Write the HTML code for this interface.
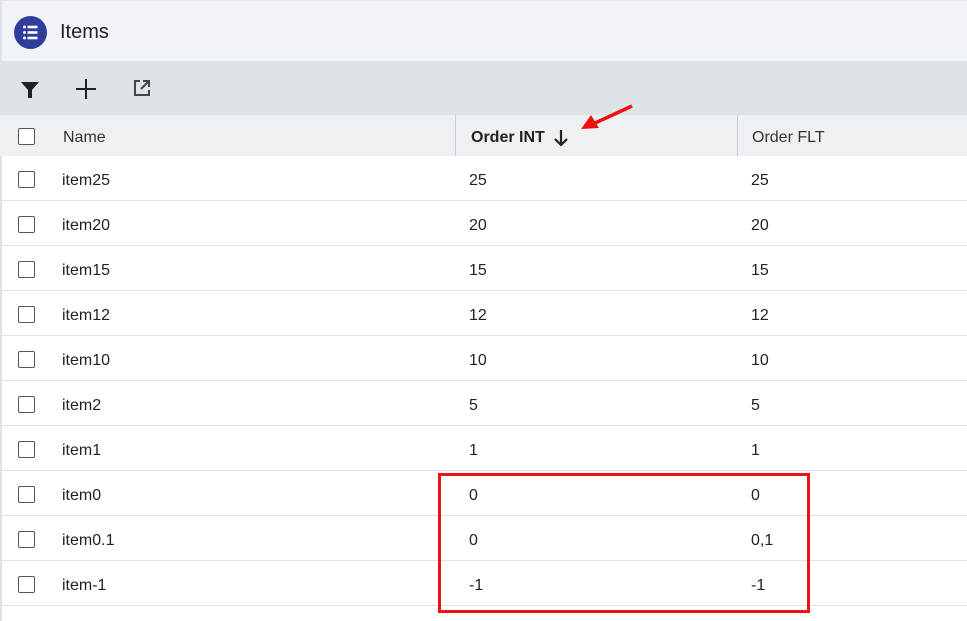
<!DOCTYPE html><html><head><style>
body{margin:0;width:967px;height:621px;overflow:hidden;background:#fff;font-family:"Liberation Sans",sans-serif;position:relative}
.top{position:absolute;left:0;top:0;width:967px;height:61px;background:#f1f5fa;border-left:2px solid #dfe3e6;border-top:1px solid #e4e7ea;box-sizing:border-box}
.logo{position:absolute;left:14px;top:16px;width:33px;height:33px;border-radius:50%;background:#2f3e9c}
.title{position:absolute;left:60px;top:21px;font-size:20px;color:#222}
.tb{position:absolute;left:0;top:61px;width:967px;height:54px;background:#dde3e7}
.hd{position:absolute;left:0;top:115px;width:967px;height:41px;background:#eef1f4}
.cb{position:absolute;left:18px;width:17px;height:17px;border:1.5px solid #555;border-radius:2px;background:#fff;box-sizing:border-box}
.t{position:absolute;font-size:16px;color:#222}
.row{position:absolute;left:0;width:967px;height:45px;border-bottom:1px solid #e2e2e2;box-sizing:border-box}
.sep{position:absolute;top:115px;width:1px;height:41px;background:#c9cdd1}
</style></head><body>
<div class="top"></div>
<div class="logo"><svg width="33" height="33" viewBox="0 0 33 33"><g fill="#fff"><circle cx="10.5" cy="11" r="1.5"/><circle cx="10.5" cy="16.5" r="1.5"/><circle cx="10.5" cy="22" r="1.5"/><rect x="13.5" y="9.7" width="10" height="2.6"/><rect x="13.5" y="15.2" width="10" height="2.6"/><rect x="13.5" y="20.7" width="10" height="2.6"/></g></svg></div>
<div class="title">Items</div>
<div class="tb">
<svg style="position:absolute;left:20px;top:20px" width="20" height="18" viewBox="0 0 20 18"><path d="M1 1h18l-7 8v8h-4v-8z" fill="#222"/></svg>
<svg style="position:absolute;left:75px;top:17px" width="22" height="22"><path d="M11 1v20M1 11h20" stroke="#222" stroke-width="2"/></svg>
<svg style="position:absolute;left:133px;top:18px" width="18" height="18" viewBox="0 0 18 18"><path d="M7 2H2v14h14v-5M10 2h6v6M16 2L8 10" stroke="#444" stroke-width="2" fill="none"/></svg>
</div>
<div class="hd"></div>
<div class="sep" style="left:455px"></div><div class="sep" style="left:737px"></div>
<div class="cb" style="top:128px"></div>
<div class="t" style="left:63px;top:129px;color:#333">Name</div>
<div class="t" style="left:471px;top:129px;font-weight:bold">Order INT</div>
<svg style="position:absolute;left:552px;top:128px" width="18" height="20"><path d="M9 2v15M3 11l6 6 6-6" stroke="#222" stroke-width="2.2" fill="none"/></svg>
<div class="t" style="left:752px;top:129px;color:#333">Order FLT</div>
<div id="rows"></div>
<script>
var d=[["item25","25","25"],["item20","20","20"],["item15","15","15"],["item12","12","12"],["item10","10","10"],["item2","5","5"],["item1","1","1"],["item0","0","0"],["item0.1","0","0,1"],["item-1","-1","-1"]];
var h="";d.forEach(function(r,i){var y=156+i*45;h+='<div class="row" style="top:'+y+'px"></div><div class="cb" style="top:'+(y+15)+'px"></div><div class="t" style="left:62px;top:'+(y+16)+'px">'+r[0]+'</div><div class="t" style="left:469px;top:'+(y+16)+'px">'+r[1]+'</div><div class="t" style="left:751px;top:'+(y+16)+'px">'+r[2]+'</div>';});
document.getElementById("rows").innerHTML=h;
</script>
<div style="position:absolute;left:0;top:156px;width:2px;height:465px;background:#dfe3e6"></div>
<div style="position:absolute;left:438px;top:473px;width:372px;height:140px;border:3px solid #e8141b;box-sizing:border-box"></div>
<svg style="position:absolute;left:575px;top:100px" width="65" height="35"><path d="M57 6L18 24" stroke="#f01010" stroke-width="3.5"/><path d="M6 29l10-14 8 13z" fill="#f01010"/></svg>
</body></html>
